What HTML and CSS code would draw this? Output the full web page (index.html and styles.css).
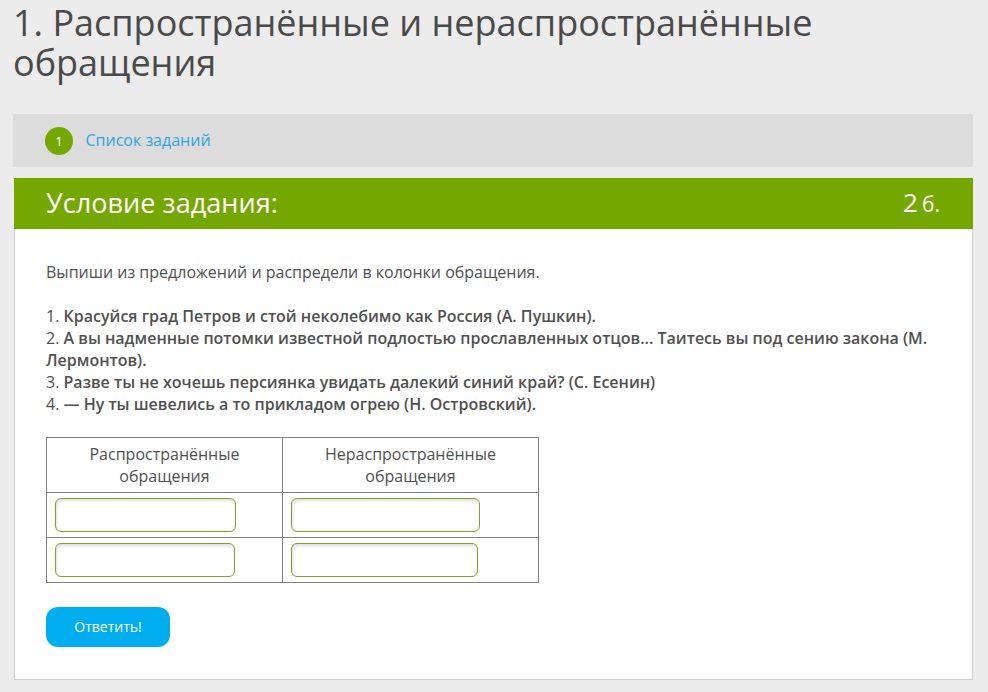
FILE: index.html
```html
<!DOCTYPE html>
<html lang="ru">
<head>
<meta charset="utf-8">
<title>Обращения</title>
<link rel="stylesheet" href="styles.css">
</head>
<body>
<h1 class="title">1. Распространённые и нераспространённые обращения</h1>
<nav class="crumbs">
  <span class="num">1</span>
  <a class="crumb-link">Список заданий</a>
</nav>
<section class="card">
  <header class="card-head">
    <h2 class="card-title">Условие задания:</h2>
    <div class="score"><span class="score-n">2</span> <span class="score-u">б.</span></div>
  </header>
  <div class="card-body">
    <p class="lead">Выпиши из предложений и распредели в колонки обращения.</p>
    <p class="list">1. <b>Красуйся град Петров и стой неколебимо как Россия (А. Пушкин).</b><br>
    2. <b>А вы надменные потомки известной подлостью прославленных отцов... Таитесь вы под сению закона (М. Лермонтов).</b><br>
    3. <b>Разве ты не хочешь персиянка увидать далекий синий край? (С. Есенин)</b><br>
    4. <b>— Ну ты шевелись а то прикладом огрею (Н. Островский).</b></p>
    <table class="grid">
      <tr class="head-row"><th class="col1">Распространённые обращения</th><th class="col2">Нераспространённые обращения</th></tr>
      <tr><td><input class="field w180" type="text"></td><td><input class="field w188" type="text"></td></tr>
      <tr><td><input class="field w179" type="text"></td><td><input class="field w186" type="text"></td></tr>
    </table>
    <button class="answer" type="button">Ответить!</button>
  </div>
</section>
</body>
</html>
```
FILE: styles.css
```css
* { box-sizing: border-box; }
html, body { margin: 0; }
body {
  height: 692px;
  overflow: hidden;
  background: #ececec;
  padding: 0 15px 0 13px;
  font-family: "Open Sans", sans-serif;
  color: #505050;
  font-size: 16px;
  line-height: 22px;
}
.title {
  margin: 3px 0 31px;
  font-weight: 400;
  font-size: 36px;
  line-height: 40px;
  color: #4a4a4a;
}
.crumbs {
  height: 53px;
  background: #dcdcdc;
  display: flex;
  align-items: center;
  padding-left: 32px;
  gap: 12.5px;
  margin-bottom: 11px;
}
.num {
  width: 28px;
  height: 28px;
  border-radius: 50%;
  background: #74a800;
  color: #fff;
  font-size: 13px;
  display: flex;
  align-items: center;
  justify-content: center;
}
.crumb-link { color: #2ea6e0; font-size: 16px; padding-bottom: 2px; }
.card {
  margin-left: 1px;
  background: #fff;
  border: 1px solid #cfcfcf;
  border-top: 0;
  height: 502px;
}
.card-head {
  margin: 0 -1px;
  height: 51px;
  background: #74a800;
  color: #fff;
  display: flex;
  align-items: center;
  justify-content: space-between;
  padding: 0 33px 2px 32px;
}
.card-title { margin: 0; font-weight: 400; font-size: 27.1px; line-height: 49px; }
.score { line-height: 49px; padding-top: 4px; }
.score-n { font-size: 26px; }
.score-u { font-size: 21px; }
.card-body { padding: 32px 31px 0; }
.lead { margin: 0 0 22px; }
.list { margin: 0 0 22px; }
.list b { font-weight: 600; }
.grid { border-collapse: collapse; width: 492px; table-layout: fixed; margin-bottom: 24px; }
.grid th, .grid td { border: 1px solid #808080; }
.grid th { font-weight: 400; padding: 5px 30px; line-height: 22px; text-align: center; }
.col1 { width: 236px; }
.col2 { width: 256px; }
.grid td { height: 45px; padding: 0 0 0 8px; }
.field {
  display: block;
  height: 34px;
  border: 1px solid #7fa51e;
  border-radius: 6px;
  background: #fff;
  box-shadow: inset 1px 2px 3px rgba(60,70,110,.18);
  outline: 0;
}
.w180 { width: 181px; }
.w179 { width: 180px; }
.w188 { width: 189px; }
.w186 { width: 187px; }
.answer {
  display: block;
  width: 124px;
  height: 40px;
  padding: 0 0 2px;
  border: 0;
  border-radius: 12px;
  background: #00aeef;
  color: #fff;
  font-family: "Open Sans", sans-serif;
  font-size: 14px;
}
```
